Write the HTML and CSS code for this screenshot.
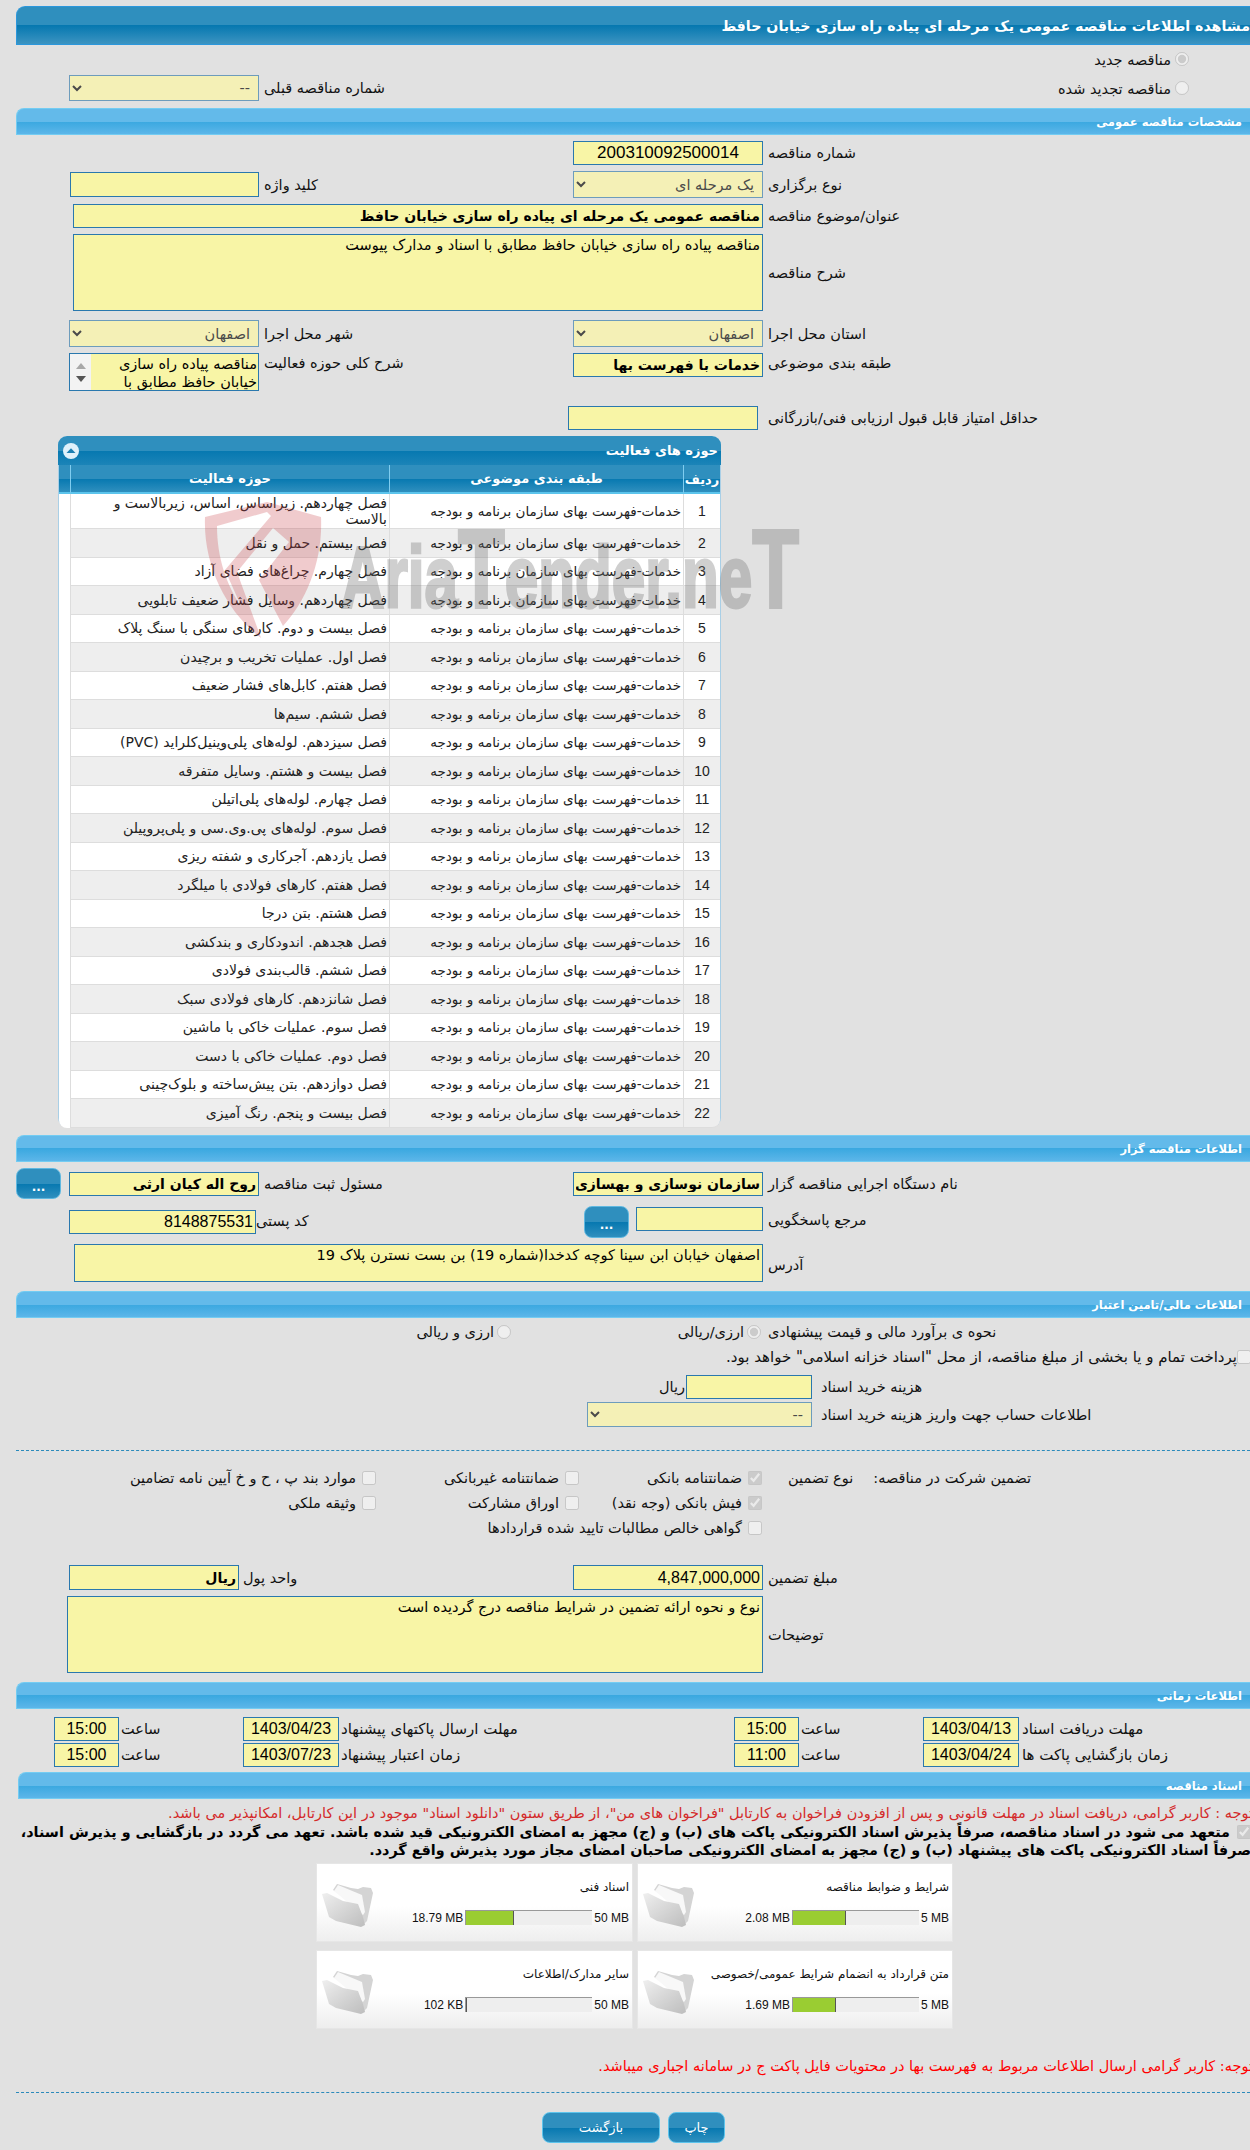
FILE: index.html
```html
<!DOCTYPE html>
<html lang="fa" dir="rtl">
<head>
<meta charset="utf-8">
<title>مشاهده اطلاعات مناقصه</title>
<link rel="stylesheet" href="styles.css">
</head>
<body>
<h1 class="title-bar">مشاهده اطلاعات مناقصه عمومی یک مرحله ای پیاده راه سازی خیابان حافظ</h1>

<div class="row h28"><div class="lbl-a radio-cell"><input type="radio" disabled checked><span>مناقصه جدید</span></div></div>
<div class="row h29">
  <div class="lbl-a radio-cell"><input type="radio" disabled><span>مناقصه تجدید شده</span></div>
  <div class="sp190"></div>
  <div class="lbl-b">شماره مناقصه قبلی</div>
  <select class="sel w190 h26" disabled><option>--</option></select>
</div>

<h2 class="sec mt6">مشخصات مناقصه عمومی</h2>
<div class="row mt6"><div class="lbl-a">شماره مناقصه</div><input class="fld w190 h24 center num17" readonly value="200310092500014"></div>
<div class="row mt6">
  <div class="lbl-a">نوع برگزاری</div>
  <select class="sel w190" disabled><option>یک مرحله ای</option></select>
  <div class="lbl-b">کلید واژه</div>
  <input class="fld w189 h25" readonly>
</div>
<div class="row mt6"><div class="lbl-a">عنوان/موضوع مناقصه</div><input class="fld w690 h24 strong" readonly value="مناقصه عمومی یک مرحله ای پیاده راه سازی خیابان حافظ"></div>
<div class="row mt6"><div class="lbl-a">شرح مناقصه</div><textarea class="fld w690 h77" readonly>مناقصه پیاده راه سازی خیابان حافظ مطابق با اسناد و مدارک پیوست</textarea></div>
<div class="row mt9">
  <div class="lbl-a">استان محل اجرا</div>
  <select class="sel w190" disabled><option>اصفهان</option></select>
  <div class="lbl-b">شهر محل اجرا</div>
  <select class="sel w190" disabled><option>اصفهان</option></select>
</div>
<div class="row mt6 top">
  <div class="lbl-a lbl-top">طبقه بندی موضوعی</div>
  <input class="fld w190 h24 strong" readonly value="خدمات با فهرست بها">
  <div class="lbl-b lbl-top">شرح کلی حوزه فعالیت</div>
  <div class="scrollbox">
    <textarea class="scroll-text" readonly>مناقصه پیاده راه سازی خیابان حافظ مطابق با اسناد و مدارک پیوست</textarea>
    <div class="sb"><i class="sb-up"></i><i class="sb-down"></i></div>
  </div>
</div>
<div class="row mt15"><div class="lbl-a">حداقل امتیاز قابل قبول ارزیابی فنی/بازرگانی</div><input class="fld w190 h24 ml-shift" readonly></div>

<section class="panel">
  <div class="panel-title"><span>حوزه های فعالیت</span><svg class="collapse" viewBox="0 0 16 16" width="16" height="16"><circle cx="8" cy="8" r="8" fill="#dff1fb"/><path d="M3.5 10 8 5.2 12.5 10z" fill="#1c7fb3"/></svg></div>
  <table class="grid">
    <colgroup><col class="c-n"><col class="c-a"><col class="c-b"><col class="c-e"></colgroup>
    <thead><tr><th class="th-n">ردیف</th><th>طبقه بندی موضوعی</th><th>حوزه فعالیت</th><th></th></tr></thead>
    <tbody>
      <tr class="first"><td class="n">1</td><td>خدمات-فهرست بهای سازمان برنامه و بودجه</td><td>فصل چهاردهم. زیراساس، اساس، زیربالاست  و<br>بالاست</td><td></td></tr>
      <tr><td class="n">2</td><td>خدمات-فهرست بهای سازمان برنامه و بودجه</td><td>فصل بیستم. حمل و نقل</td><td></td></tr>
      <tr><td class="n">3</td><td>خدمات-فهرست بهای سازمان برنامه و بودجه</td><td>فصل چهارم. چراغ‌های فضای آزاد</td><td></td></tr>
      <tr><td class="n">4</td><td>خدمات-فهرست بهای سازمان برنامه و بودجه</td><td>فصل چهاردهم. وسایل فشار ضعیف تابلویی</td><td></td></tr>
      <tr><td class="n">5</td><td>خدمات-فهرست بهای سازمان برنامه و بودجه</td><td>فصل بیست و دوم. کارهای سنگی با سنگ پلاک</td><td></td></tr>
      <tr><td class="n">6</td><td>خدمات-فهرست بهای سازمان برنامه و بودجه</td><td>فصل اول. عملیات تخریب و برچیدن</td><td></td></tr>
      <tr><td class="n">7</td><td>خدمات-فهرست بهای سازمان برنامه و بودجه</td><td>فصل هفتم. کابل‌های فشار ضعیف</td><td></td></tr>
      <tr><td class="n">8</td><td>خدمات-فهرست بهای سازمان برنامه و بودجه</td><td>فصل ششم. سیم‌ها</td><td></td></tr>
      <tr><td class="n">9</td><td>خدمات-فهرست بهای سازمان برنامه و بودجه</td><td>فصل سیزدهم. لوله‌های پلی‌وینیل‌کلراید (PVC)</td><td></td></tr>
      <tr><td class="n">10</td><td>خدمات-فهرست بهای سازمان برنامه و بودجه</td><td>فصل بیست و هشتم. وسایل متفرقه</td><td></td></tr>
      <tr><td class="n">11</td><td>خدمات-فهرست بهای سازمان برنامه و بودجه</td><td>فصل چهارم. لوله‌های پلی‌اتیلن</td><td></td></tr>
      <tr><td class="n">12</td><td>خدمات-فهرست بهای سازمان برنامه و بودجه</td><td>فصل سوم. لوله‌های پی.وی.سی و پلی‌پروپیلن</td><td></td></tr>
      <tr><td class="n">13</td><td>خدمات-فهرست بهای سازمان برنامه و بودجه</td><td>فصل یازدهم. آجرکاری و شفته ریزی</td><td></td></tr>
      <tr><td class="n">14</td><td>خدمات-فهرست بهای سازمان برنامه و بودجه</td><td>فصل هفتم. کارهای فولادی با میلگرد</td><td></td></tr>
      <tr><td class="n">15</td><td>خدمات-فهرست بهای سازمان برنامه و بودجه</td><td>فصل هشتم. بتن درجا</td><td></td></tr>
      <tr><td class="n">16</td><td>خدمات-فهرست بهای سازمان برنامه و بودجه</td><td>فصل هجدهم. اندودکاری و بندکشی</td><td></td></tr>
      <tr><td class="n">17</td><td>خدمات-فهرست بهای سازمان برنامه و بودجه</td><td>فصل ششم. قالب‌بندی فولادی</td><td></td></tr>
      <tr><td class="n">18</td><td>خدمات-فهرست بهای سازمان برنامه و بودجه</td><td>فصل شانزدهم. کارهای فولادی سبک</td><td></td></tr>
      <tr><td class="n">19</td><td>خدمات-فهرست بهای سازمان برنامه و بودجه</td><td>فصل سوم. عملیات خاکی با ماشین</td><td></td></tr>
      <tr><td class="n">20</td><td>خدمات-فهرست بهای سازمان برنامه و بودجه</td><td>فصل دوم. عملیات خاکی با دست</td><td></td></tr>
      <tr><td class="n">21</td><td>خدمات-فهرست بهای سازمان برنامه و بودجه</td><td>فصل دوازدهم. بتن پیش‌ساخته و بلوک‌چینی</td><td></td></tr>
      <tr><td class="n">22</td><td>خدمات-فهرست بهای سازمان برنامه و بودجه</td><td>فصل بیست و پنجم. رنگ آمیزی</td><td></td></tr>
    </tbody>
  </table>
  <svg class="watermark" viewBox="0 0 610 145" width="610" height="145" aria-hidden="true">
    <path d="M6 17 68 2 122 17 C124 60 108 100 84 126 L60 80 90 42 74 28 38 72 62 138 C28 112 4 66 6 17Z M18 26 C18 58 28 86 42 106 L26 70 72 16 68 12 18 26Z" fill="#c9464a" fill-opacity=".28" fill-rule="evenodd"/>
    <text class="wm-text" x="142" y="107" textLength="458" lengthAdjust="spacingAndGlyphs">Aria<tspan class="wm-cap">T</tspan>ender.ne<tspan class="wm-cap">T</tspan></text>
  </svg>
</section>

<h2 class="sec mt8">اطلاعات مناقصه گزار</h2>
<div class="row mt6 h31">
  <div class="lbl-a">نام دستگاه اجرایی مناقصه گزار</div>
  <input class="fld w190 h24 strong" readonly value="سازمان نوسازی و بهسازی">
  <div class="lbl-b">مسئول ثبت مناقصه</div>
  <input class="fld w190 h24 strong" readonly value="روح اله کیان ارثی">
  <button class="btn btn-dots" type="button">...</button>
</div>
<div class="row mt7 top">
  <div class="lbl-a lbl-ref">مرجع پاسخگویی</div>
  <input class="fld w127 h24 mt1" readonly>
  <button class="btn btn-dots btn-ref" type="button">...</button>
  <div class="lbl-post">کد پستی</div>
  <input class="fld w187 h24 mt4 num16" readonly value="8148875531">
</div>
<div class="row mt6 top">
  <div class="lbl-a lbl-addr">آدرس</div>
  <textarea class="fld w689 h38" readonly>اصفهان خیابان ابن سینا کوچه کدخدا(شماره 19) بن بست نسترن پلاک 19</textarea>
</div>

<h2 class="sec mt9">اطلاعات مالی/تامین اعتبار</h2>
<div class="row h27">
  <div class="lbl-a">نحوه ی برآورد مالی و قیمت پیشنهادی</div>
  <div class="opt w250"><input type="radio" disabled checked><span>ارزی/ریالی</span></div>
  <div class="opt"><input type="radio" disabled><span>ارزی و ریالی</span></div>
</div>
<div class="row pay h22 mt1"><input type="checkbox" disabled><span>پرداخت تمام و یا بخشی از مبلغ مناقصه، از محل "اسناد خزانه اسلامی" خواهد بود.</span></div>
<div class="row mt7 h24">
  <div class="lbl-c">هزینه خرید اسناد</div>
  <input class="fld w126 h24" readonly>
  <span class="unit">ریال</span>
</div>
<div class="row mt3 h25">
  <div class="lbl-c">اطلاعات حساب جهت واریز هزینه خرید اسناد</div>
  <select class="sel w225 h25" disabled><option>--</option></select>
</div>
<hr class="dash mt23">

<div class="row g-row g-first">
  <div class="g-head"><span>تضمین شرکت در مناقصه:</span><span>نوع تضمین</span></div>
  <label class="g-opt g1"><input type="checkbox" disabled checked><span>ضمانتنامه بانکی</span></label>
  <label class="g-opt g2"><input type="checkbox" disabled><span>ضمانتنامه غیربانکی</span></label>
  <label class="g-opt"><input type="checkbox" disabled><span>موارد بند پ ، ح و خ آیین نامه تضامین</span></label>
</div>
<div class="row g-row">
  <div class="g-head"></div>
  <label class="g-opt g1"><input type="checkbox" disabled checked><span>فیش بانکی (وجه نقد)</span></label>
  <label class="g-opt g2"><input type="checkbox" disabled><span>اوراق مشارکت</span></label>
  <label class="g-opt"><input type="checkbox" disabled><span>وثیقه ملکی</span></label>
</div>
<div class="row g-row">
  <div class="g-head"></div>
  <label class="g-opt"><input type="checkbox" disabled><span>گواهی خالص مطالبات تایید شده قراردادها</span></label>
</div>

<div class="row mt25">
  <div class="lbl-a">مبلغ تضمین</div>
  <input class="fld w190 h25 num16" readonly value="4,847,000,000">
  <div class="lbl-d">واحد پول</div>
  <input class="fld w170 h25 strong" readonly value="ریال">
</div>
<div class="row mt6"><div class="lbl-a">توضیحات</div><textarea class="fld w696 h77" readonly>نوع و نحوه ارائه تضمین در شرایط مناقصه درج گردیده است</textarea></div>

<h2 class="sec mt9">اطلاعات زمانی</h2>
<div class="row mt8 h24">
  <div class="t-a">مهلت دریافت اسناد</div><input class="fld t-date" readonly value="1403/04/13">
  <div class="t-b">ساعت</div><input class="fld t-time" readonly value="15:00">
  <div class="t-c">مهلت ارسال پاکتهای پیشنهاد</div><input class="fld t-date" readonly value="1403/04/23">
  <div class="t-b">ساعت</div><input class="fld t-time" readonly value="15:00">
</div>
<div class="row mt2 h24">
  <div class="t-a">زمان بازگشایی پاکت ها</div><input class="fld t-date" readonly value="1403/04/24">
  <div class="t-b">ساعت</div><input class="fld t-time" readonly value="11:00">
  <div class="t-c">زمان اعتبار پیشنهاد</div><input class="fld t-date" readonly value="1403/07/23">
  <div class="t-b">ساعت</div><input class="fld t-time" readonly value="15:00">
</div>

<h2 class="sec sec-docs">اسناد مناقصه</h2>
<p class="note-red">توجه : کاربر گرامی، دریافت اسناد در مهلت قانونی و پس از افزودن فراخوان به کارتابل "فراخوان های من"، از طریق ستون "دانلود اسناد" موجود در این کارتابل، امکانپذیر می باشد.</p>
<p class="pledge"><input type="checkbox" disabled checked> متعهد می شود در اسناد مناقصه، صرفاً پذیرش اسناد الکترونیکی پاکت های (ب) و (ج) مجهز به امضای الکترونیکی قید شده باشد. تعهد می گردد در بازگشایی و پذیرش اسناد،<br>صرفاً اسناد الکترونیکی پاکت های پیشنهاد (ب) و (ج) مجهز به امضای الکترونیکی صاحبان امضای مجاز مورد پذیرش واقع گردد.</p>

<div class="cards">
  <article class="card">
    <div class="card-main"><div class="card-title">شرایط و ضوابط مناقصه</div>
      <div class="usage"><span>5 MB</span><div class="meter"><i style="width:53px"></i></div><span>2.08 MB</span></div></div>
    <svg class="folder" viewBox="0 0 52 46"><use href="#folder"/></svg>
  </article>
  <article class="card">
    <div class="card-main"><div class="card-title">اسناد فنی</div>
      <div class="usage"><span>50 MB</span><div class="meter"><i style="width:48px"></i></div><span>18.79 MB</span></div></div>
    <svg class="folder" viewBox="0 0 52 46"><use href="#folder"/></svg>
  </article>
  <article class="card">
    <div class="card-main"><div class="card-title">متن قرارداد به انضمام شرایط عمومی/خصوصی</div>
      <div class="usage"><span>5 MB</span><div class="meter"><i style="width:43px"></i></div><span>1.69 MB</span></div></div>
    <svg class="folder" viewBox="0 0 52 46"><use href="#folder"/></svg>
  </article>
  <article class="card">
    <div class="card-main"><div class="card-title">سایر مدارک/اطلاعات</div>
      <div class="usage"><span>50 MB</span><div class="meter"><i style="width:1px"></i></div><span>102 KB</span></div></div>
    <svg class="folder" viewBox="0 0 52 46"><use href="#folder"/></svg>
  </article>
</div>

<p class="note-bright">توجه: کاربر گرامی ارسال اطلاعات مربوط به فهرست بها در محتویات فایل پاکت ج در سامانه اجباری میباشد.</p>
<hr class="dash mt16">
<div class="actions"><button class="btn btn-act btn-print" type="button">چاپ</button><button class="btn btn-act btn-back" type="button">بازگشت</button></div>

<svg class="defs" width="0" height="0" aria-hidden="true">
  <defs>
    <linearGradient id="fg" x1="0" y1="0" x2="1" y2="1"><stop offset="0" stop-color="#efefef"/><stop offset="1" stop-color="#bdbdbd"/></linearGradient>
    <g id="folder">
      <path d="M12 9 16 3 30 7 37 8 42 6 50 7 52 12 46 40 42 44 30 20z" fill="#d4d4d4"/>
      <path d="M13 10 17 4 41 14 44 31 42 34z" fill="#f8f8f8"/>
      <path d="M1 13 6 12 22 20 37 23 42 36 44 44 40 46 15 40 8 36z" fill="url(#fg)"/>
    </g>
  </defs>
</svg>
</body>
</html>
```
FILE: styles.css
```css
* { box-sizing: border-box; }
html, body { margin: 0; padding: 0; overflow-x: hidden; }
body {
  width: 1250px;
  background: #e1e1e1;
  color: #111;
  direction: rtl;
  font: 14.5px/16px "DejaVu Sans", sans-serif;
}
input, select, textarea, button { font: inherit; margin: 0; color: #000; }
h1, h2, p { margin: 0; }

.title-bar {
  margin: 6px 0 0 16px;
  height: 39px;
  padding-top: 10px;
  overflow: hidden;
  white-space: nowrap;
  color: #fff;
  font-size: 14.2px;
  font-weight: bold;
  line-height: 18px;
  border: solid #2b97dc;
  border-width: 1px 0 1px 1px;
  border-top-left-radius: 9px;
  background: linear-gradient(#2f8fbe 0, #2f8fbe 50%, #0678b0 50%, #3c94c1 100%);
}
.sec {
  margin-left: 16px;
  height: 27px;
  padding: 6px 8px 0 0;
  color: #fff;
  font-size: 11.5px;
  font-weight: bold;
  line-height: 14px;
  border: solid #73ccf2;
  border-width: 1px 0 1px 1px;
  border-top-left-radius: 8px;
  background: linear-gradient(#63baea 0, #63baea 50%, #3aa8e0 50%, #5cb6e9 100%);
}
.sec-docs { margin: 5px 0 0 18px; }

.row { display: flex; align-items: center; }
.top { align-items: flex-start; }
.mt1 { margin-top: 1px; } .mt2 { margin-top: 2px; } .mt3 { margin-top: 3px; } .mt4 { margin-top: 4px; }
.mt5 { margin-top: 5px; } .mt6 { margin-top: 6px; } .mt7 { margin-top: 7px; } .mt8 { margin-top: 8px; }
.mt9 { margin-top: 9px; } .mt15 { margin-top: 15px; } .mt16 { margin-top: 16px; } .mt23 { margin-top: 23px; }
.mt25 { margin-top: 25px; }
.h22 { height: 22px; } .h24 { height: 24px; } .h25 { height: 25px; } .h26 { height: 26px; } .h27 { height: 27px; }
.h28 { height: 28px; } .h29 { height: 29px; } .h31 { height: 31px; } .h38 { height: 38px; } .h77 { height: 77px; }

.lbl-a { width: 487px; padding-left: 5px; text-align: left; flex: none; }
.lbl-b { width: 314px; padding-left: 5px; text-align: left; flex: none; }
.lbl-c { width: 438px; padding-left: 9px; text-align: left; flex: none; }
.lbl-d { width: 334px; padding-left: 4px; text-align: left; flex: none; }
.lbl-top { padding-top: 2px; }
.lbl-ref { padding-top: 6px; }
.lbl-addr { padding-top: 13px; }
.lbl-post { width: 328px; padding: 7px 11px 0 0; text-align: left; flex: none; }
.sp190 { width: 190px; flex: none; }

.radio-cell { display: flex; align-items: center; padding: 0 61px 0 0; text-align: right; }
.radio-cell span { padding-top: 2px; }
.opt { display: flex; align-items: center; flex: none; }
.w250 { width: 250px; }
input[type=radio], input[type=checkbox] { width: 14px; height: 14px; flex: none; }
.opt input { margin: 0 2px 0 3px; }
.radio-cell input { margin-left: 4px; }

.fld {
  flex: none;
  padding: 0 2px;
  background: #f8f5a6;
  border: 1px solid #2a78ae;
  border-radius: 0;
  outline: none;
  resize: none;
  overflow: hidden;
  text-align: right;
}
textarea.fld { line-height: 16px; padding-top: 2px; }
.scrollbox { display: flex; width: 190px; height: 38px; flex: none; background: #f8f5a6; border: 1px solid #2a78ae; }
.scroll-text { flex: 1; min-width: 0; padding: 1px 1px 0 0; background: transparent; border: 0; outline: none; resize: none; overflow: hidden; line-height: 18px; text-align: right; }
.sb { position: relative; width: 21px; flex: none; background: #f3f3f3; }
.sb i { position: absolute; left: 6px; width: 0; height: 0; border: solid transparent; border-width: 0 5px; }
.sb-up { top: 9px; border-bottom: 6px solid #a8a8a8 !important; }
.sb-down { bottom: 8px; border-top: 6px solid #555 !important; }
.center { text-align: center; }
.num17 { font: 17px "Liberation Sans", sans-serif; }
.num16 { font: 16px "Liberation Sans", sans-serif; }
.strong { font-size: 14px; font-weight: bold; }
.ml-shift { margin-right: 5px; }
.sel {
  flex: none;
  height: 27px;
  padding: 0 4px;
  color: #4a4a4a;
  opacity: 1;
  background-color: #f4f0b6;
  border: 1px solid #6d9cbc;
  border-radius: 0;
  font-size: 14.5px;
}
.sel.h26 { height: 26px; }
.sel.h25 { height: 25px; }
.w126 { width: 126px; } .w127 { width: 127px; } .w170 { width: 170px; } .w187 { width: 187px; }
.w189 { width: 189px; } .w190 { width: 190px; } .w225 { width: 225px; } .w689 { width: 689px; }
.w690 { width: 690px; } .w696 { width: 696px; }
.unit { margin-right: 1px; }

.panel {
  position: relative;
  margin: 6px 529px 0 58px;
  height: 691px;
  width: 663px;
  background: #fff;
  border: 1px solid #a9cfe6;
  border-top: 0;
  border-radius: 9px;
}
.panel-title {
  display: flex;
  justify-content: space-between;
  align-items: center;
  height: 29px;
  margin: 0 -1px;
  padding: 0 3px 0 5px;
  color: #fff;
  font-size: 13px;
  font-weight: bold;
  border-radius: 9px 9px 0 0;
  background: linear-gradient(#2f8fbe 0, #2f8fbe 50%, #0678b0 50%, #1b84b8 100%);
}
.grid { width: 661px; table-layout: fixed; border-collapse: separate; border-spacing: 0; direction: rtl; }
.c-n { width: 37px; } .c-a { width: 294px; } .c-b { width: 319px; } .c-e { width: 11px; }
.grid th {
  height: 29px;
  padding: 0;
  color: #fff;
  font-size: 13px;
  font-weight: bold;
  border-left: 1px solid #7fcdf0;
  border-bottom: 2px solid #5cc4ec;
  background: linear-gradient(#2f8fbe 0, #2f8fbe 50%, #0678b0 50%, #2f8fbe 100%);
}
.grid th:last-child { border-left: 0; }
.grid th.th-n { padding-top: 3px; }
.grid td {
  height: 28.5px;
  padding: 0 2px 0 4px;
  font-size: 13.5px;
  line-height: 16px;
  color: #222;
  border-left: 1px solid #ddd;
  border-bottom: 1px solid #ddd;
  text-align: right;
}
.grid td:nth-child(3) { font-size: 14px; }
.grid tr:nth-child(even) td { background: #eee; }
.grid tr td:last-child { background: #fff; border: 0; }
.grid .first td { height: 35px; }
.grid td.n { padding: 0; text-align: center; font: 14px "Liberation Sans", sans-serif; }
.grid tr:last-child td.n { border-bottom-right-radius: 8px; }
.grid tr:last-child td:last-child { border-bottom-left-radius: 8px; }
.watermark { position: absolute; left: 140px; top: 64px; overflow: visible; pointer-events: none; direction: ltr; }
.wm-text { font: bold 88px "Liberation Sans Narrow", "Liberation Sans", sans-serif; fill: #6e6e6e; stroke: #6e6e6e; stroke-width: 3px; opacity: .32; }
.wm-cap { font-size: 112px; }

.btn {
  flex: none;
  padding: 0;
  color: #fff;
  border: 1px solid #5fb8e0;
  border-radius: 8px;
  background: linear-gradient(#2f8fbe 0, #2f8fbe 50%, #0678b0 50%, #2f8fbe 100%);
}
.btn-dots { width: 45px; height: 31px; margin-right: 8px; font-size: 12px; font-weight: bold; line-height: 36px; }
.btn-ref { height: 32px; margin-right: 7px; }

.pay { font-size: 15px; }
.pay input { margin: 0 -1px 0 0; }
.dash { height: 0; margin-bottom: 0; margin-left: 16px; border: 0; border-top: 1px dashed #2a8abb; }

.g-row { height: 25px; }
.g-first { margin-top: 14px; }
.g-head { width: 487px; padding-right: 219px; display: flex; gap: 20px; flex: none; }
.g-opt { display: flex; align-items: center; flex: none; }
.g-opt input { margin: 0 1px 0 6px; }
.g1 { width: 183px; }
.g2 { width: 203px; }

.t-a { width: 231px; padding-left: 3px; text-align: left; flex: none; font-size: 15px; }
.t-b { width: 124px; padding-left: 2px; text-align: left; flex: none; }
.t-c { width: 395px; padding-left: 2px; text-align: left; flex: none; font-size: 15px; }
.t-date, .t-time { height: 24px; font: 16px "Liberation Sans", sans-serif; text-align: center; padding: 0; }
.t-date { width: 96px; }
.t-time { width: 65px; }

.note-red { height: 20px; margin-top: 4px; margin-right: -3px; white-space: nowrap; color: #d42a2a; line-height: 20px; }
.pledge { margin-right: -1px; font-size: 14.35px; font-weight: bold; line-height: 18px; color: #000; white-space: nowrap; }
.pledge input { margin: 0 0 0 2px; vertical-align: -2px; }

.cards { display: grid; grid-template-columns: 316px 317px; gap: 8px 4px; margin: 4px 297px 0 0; justify-content: start; }
.card {
  display: flex;
  justify-content: space-between;
  height: 79px;
  padding: 0 3px 0 4px;
  background: linear-gradient(#fff 55%, #eee 100%);
  border: 1px solid #e6e6e6;
}
.card-main { display: flex; flex-direction: column; flex: none; }
.card-title { margin-top: 14px; height: 18px; font-size: 12px; line-height: 18px; color: #111; }
.usage { display: flex; align-items: center; gap: 2px; margin-top: 14px; font: 12px "Liberation Sans", sans-serif; }
.usage span { direction: ltr; unicode-bidi: isolate; }
.meter {
  width: 127px;
  height: 15px;
  display: flex;
  justify-content: flex-start;
  direction: ltr;
  background: #eee;
  border-top: 1px solid #999;
  border-left: 1px solid #999;
}
.meter i { display: block; height: 100%; background: #9acd32; border-right: 1px solid #555; }
.folder { width: 52px; height: 46px; margin-top: 17px; flex: none; }

.note-bright { margin: 27px -3px 0 0; height: 20px; white-space: nowrap; color: #f00; line-height: 20px; }
.actions { display: flex; gap: 8px; margin-top: 19px; padding-right: 525px; }
.btn-act { height: 31px; font-size: 13px; border-color: #5cc4ec; }
.btn-print { width: 57px; }
.btn-back { width: 118px; }
.defs { position: absolute; }
```
